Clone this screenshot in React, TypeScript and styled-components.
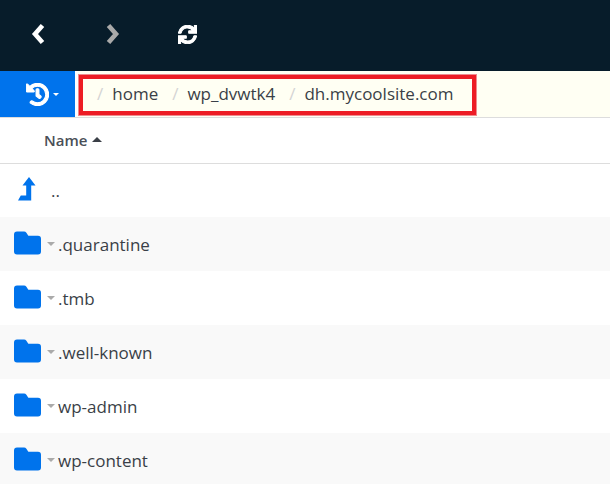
import React from 'react';
import styled, { createGlobalStyle } from 'styled-components';
import { FaSync, FaHistory } from 'react-icons/fa';

const GlobalStyle = createGlobalStyle`
  html, body {
    margin: 0;
    padding: 0;
    height: 100%;
    overflow: hidden;
    background: #fff;
  }
  body {
    font-family: "Open Sans", "Liberation Sans", sans-serif;
    color: #3a3f47;
  }
`;

const Page = styled.div`
  width: 610px;
  height: 484px;
  overflow: hidden;
  position: relative;
`;

const Toolbar = styled.div`
  height: 71px;
  background: #071c2a;
  display: flex;
  align-items: center;
  padding-bottom: 3px;
  box-sizing: border-box;
`;

const NavButton = styled.div<{ $muted?: boolean; $width: number }>`
  width: ${(p) => p.$width}px;
  display: flex;
  justify-content: center;
  color: ${(p) => (p.$muted ? '#a9a9a9' : '#fff')};
  font-size: 19px;
`;

const CrumbRow = styled.div`
  height: 47px;
  display: flex;
  background: #fffff3;
  border-bottom: 1px solid #ddd;
  box-sizing: border-box;
`;

const HistoryButton = styled.div`
  width: 75px;
  background: #0073ec;
  color: #fff;
  display: flex;
  align-items: center;
  gap: 4px;
  padding-left: 26px;
  box-sizing: border-box;
  font-size: 23px;
  box-shadow: 3px 0 0 #fff;
`;

const Caret = styled.span<{ $color: string; $size: number }>`
  display: inline-block;
  width: 0;
  height: 0;
  border-left: ${(p) => p.$size}px solid transparent;
  border-right: ${(p) => p.$size}px solid transparent;
  border-top: ${(p) => p.$size}px solid ${(p) => p.$color};
`;

const Crumbs = styled.div`
  display: flex;
  align-items: center;
  padding-left: 22px;
  font-size: 17px;
  margin-top: -1px;
`;

const Slash = styled.span`
  color: #d4d4d4;
  margin-right: 9px;
`;

const Crumb = styled.span`
  margin-right: 14px;
  color: #3a3f47;
`;

const Highlight = styled.div`
  position: absolute;
  left: 78px;
  top: 74px;
  width: 399px;
  height: 42px;
  box-sizing: border-box;
  border: 5px solid #ed1c24;
  outline: 1px solid #f08a8e;
  outline-offset: -1px;
`;

const HeaderRow = styled.div`
  height: 46px;
  border-bottom: 1px solid #ddd;
  box-sizing: border-box;
  display: flex;
  align-items: center;
  gap: 5px;
  padding-left: 44px;
  padding-bottom: 2px;
  font-size: 15px;
  font-weight: 600;
  color: #4a4f57;
`;

const UpArrow = styled.span`
  display: inline-block;
  width: 0;
  height: 0;
  border-left: 5px solid transparent;
  border-right: 5px solid transparent;
  border-bottom: 5px solid #3a3f47;
`;

const Row = styled.div<{ $striped: boolean; $height: number }>`
  height: ${(p) => p.$height}px;
  display: flex;
  align-items: center;
  background: ${(p) => (p.$striped ? '#f9f9f9' : '#fff')};
`;

const ParentIcon = styled.span`
  width: 51px;
  padding-left: 18px;
  padding-bottom: 4px;
  box-sizing: border-box;
  display: flex;
`;

const FolderIcon = styled.span`
  width: 47px;
  padding-left: 14px;
  padding-bottom: 3px;
  box-sizing: border-box;
  display: flex;
`;

const FileName = styled.span<{ $gap: number }>`
  font-size: 17px;
  color: #3a3f47;
  margin-left: ${(p) => p.$gap}px;
`;

const Chevron = ({ points }: { points: string }) => (
  <svg width="14" height="20" viewBox="0 0 14 20">
    <polyline points={points} fill="none" stroke="currentColor" strokeWidth="4.6" strokeLinejoin="miter" />
  </svg>
);

const Folder = () => (
  <svg width="27" height="24" viewBox="0 0 27 24">
    <path
      d="M3 0.5h7a3 3 0 0 1 2.4 1.2l1.6 2.6a1 1 0 0 0 .9.5H24a3 3 0 0 1 3 3V20.5a3 3 0 0 1-3 3H3a3 3 0 0 1-3-3V3.5a3 3 0 0 1 3-3z"
      fill="#0073ec"
    />
  </svg>
);

const LevelUp = () => (
  <svg width="18" height="24" viewBox="0 0 18 24">
    <path d="M11 0l6.5 8.5H13.2V23.5H0L2.8 18.5H8.2V8.5H4.5z" fill="#0073ec" />
  </svg>
);

const folders = ['.quarantine', '.tmb', '.well-known', 'wp-admin', 'wp-content'];

export default function App() {
  return (
    <Page>
      <GlobalStyle />
      <Toolbar>
        <NavButton $width={76}><Chevron points="11.5,1.5 4,10 11.5,18.5" /></NavButton>
        <NavButton $width={74} $muted><Chevron points="2.5,1.5 10,10 2.5,18.5" /></NavButton>
        <NavButton $width={75}><FaSync stroke="currentColor" strokeWidth={28} /></NavButton>
      </Toolbar>
      <CrumbRow>
        <HistoryButton>
          <FaHistory stroke="currentColor" strokeWidth={24} />
          <Caret $color="#fff" $size={3} />
        </HistoryButton>
        <Crumbs>
          <Slash>/</Slash><Crumb>home</Crumb>
          <Slash>/</Slash><Crumb>wp_dvwtk4</Crumb>
          <Slash>/</Slash><Crumb>dh.mycoolsite.com</Crumb>
        </Crumbs>
      </CrumbRow>
      <Highlight />
      <HeaderRow>Name <UpArrow /></HeaderRow>
      <Row $striped={false} $height={53}>
        <ParentIcon><LevelUp /></ParentIcon>
        <FileName $gap={0}>..</FileName>
      </Row>
      {folders.map((name, i) => (
        <Row key={name} $striped={i % 2 === 0} $height={54}>
          <FolderIcon><Folder /></FolderIcon>
          <Caret $color="#aaa" $size={4} />
          <FileName $gap={3}>{name}</FileName>
        </Row>
      ))}
    </Page>
  );
}
